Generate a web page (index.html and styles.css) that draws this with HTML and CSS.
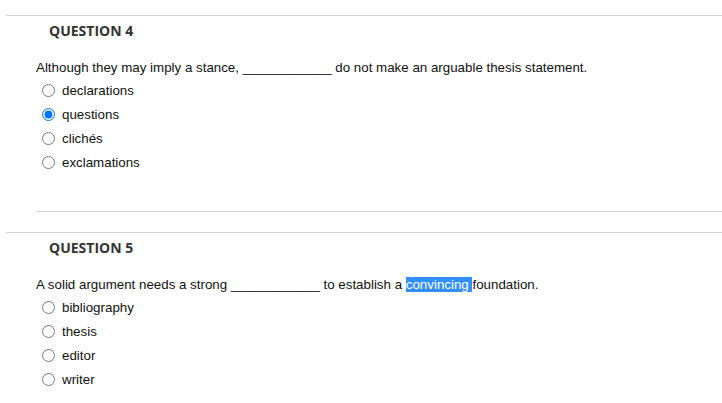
FILE: index.html
```html
<!DOCTYPE html>
<html>
<head>
<meta charset="utf-8">
<link rel="stylesheet" href="styles.css">
</head>
<body>
<section class="question">
  <h3 class="q-title">QUESTION 4</h3>
  <div class="q-body">
    <p class="q-text">Although they may imply a stance, ____________ do not make an arguable thesis statement.</p>
    <ul class="options">
      <li class="option"><input type="radio" name="q4"><span>declarations</span></li>
      <li class="option"><input type="radio" name="q4" checked><span>questions</span></li>
      <li class="option"><input type="radio" name="q4"><span>clichés</span></li>
      <li class="option"><input type="radio" name="q4"><span>exclamations</span></li>
    </ul>
    <hr class="q-end">
  </div>
</section>
<section class="question">
  <h3 class="q-title">QUESTION 5</h3>
  <div class="q-body">
    <p class="q-text">A solid argument needs a strong ____________ to establish a <span class="sel">convincing </span>foundation.</p>
    <ul class="options">
      <li class="option"><input type="radio" name="q5"><span>bibliography</span></li>
      <li class="option"><input type="radio" name="q5"><span>thesis</span></li>
      <li class="option"><input type="radio" name="q5"><span>editor</span></li>
      <li class="option"><input type="radio" name="q5"><span>writer</span></li>
    </ul>
  </div>
</section>
</body>
</html>
```

FILE: styles.css
```css
html, body {
  margin: 0;
  padding: 0;
  background: #fff;
}
body {
  padding-top: 15px;
  font-family: "Liberation Sans", Arial, sans-serif;
  font-size: 13.33px;
  color: #111;
}
.question {
  margin-left: 6px;
  border-top: 1px solid #d3d3d3;
}
.q-title {
  margin: 0;
  padding: 5px 0 0 43px;
  font-family: "Open Sans", sans-serif;
  font-weight: 700;
  font-size: 14px;
  line-height: 20px;
  color: #333;
}
.q-body {
  padding-left: 30px;
}
.q-text {
  margin: 19px 0 0 0;
  line-height: 16px;
}
.options {
  list-style: none;
  margin: 2px 0 0 0;
  padding: 0;
}
.option {
  display: flex;
  align-items: center;
  height: 24px;
}
.option input {
  margin: 0 7px 0 6px;
  width: 13px;
  height: 13px;
}
.sel {
  background: #338fff;
  color: #fff;
}
.q-end {
  margin: 37px 0 20px 0;
  border: 0;
  border-top: 1px solid #d3d3d3;
  height: 0;
}
```
